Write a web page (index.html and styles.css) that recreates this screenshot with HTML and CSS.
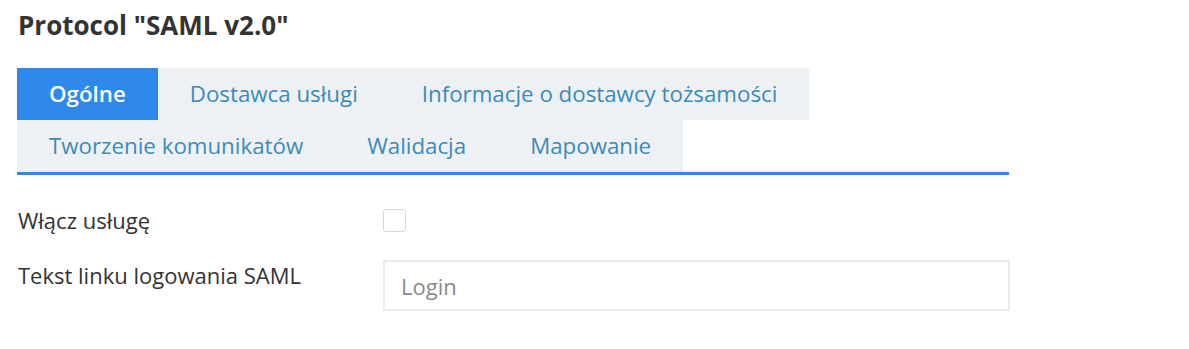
FILE: index.html
```html
<!DOCTYPE html>
<html>
<head>
    <title>Protocol SAML v2.0</title>
    <link rel="stylesheet" href="styles.css">
</head>
<body>
    <h1>Protocol "SAML v2.0"</h1>

    <!-- Tabs -->
    <div class="tabs">
        <a class="tab active">Ogólne</a>
        <a class="tab">Dostawca usługi</a>
        <a class="tab">Informacje o dostawcy tożsamości</a>
        <a class="tab">Tworzenie komunikatów</a>
        <a class="tab">Walidacja</a>
        <a class="tab">Mapowanie</a>
    </div>

    <!-- General settings -->
    <form class="settings">
        <div class="form-row">
            <label>Włącz usługę</label>
            <input type="checkbox" class="check">
        </div>
        <div class="form-row">
            <label>Tekst linku logowania SAML</label>
            <input type="text" class="text-input" placeholder="Login">
        </div>
    </form>
</body>
</html>
```

FILE: styles.css
```css
body {
    font-family: "Open Sans", Arial, sans-serif;
    margin: 0;
    padding: 0 17px;
    color: #333;
}
h1 {
    font-size: 26px;
    font-weight: bold;
    margin: 9px 1px 0;
    line-height: 32px;
}
.tabs {
    display: flex;
    flex-wrap: wrap;
    width: 992px;
    margin-top: 27px;
    border-bottom: 3px solid #2f89ea;
}
.tab {
    background-color: #eef1f4;
    color: #3b8bba;
    font-size: 22.3px;
    line-height: 52px;
    padding: 0 32px;
    cursor: pointer;
}
.tab.active {
    background-color: #2f89ea;
    color: white;
    font-weight: 600;
}
.settings {
    margin-top: 30px;
}
.form-row {
    display: flex;
    align-items: flex-start;
    margin-bottom: 25px;
}
.form-row label {
    width: 365px;
    font-size: 22px;
    line-height: 30px;
    padding-left: 1px;
}
.check {
    appearance: none;
    width: 23px;
    height: 23px;
    margin: 4px 0 0;
    border: 1px solid #d8d8d8;
    border-radius: 3px;
    background: white;
}
.text-input {
    width: 627px;
    height: 51px;
    box-sizing: border-box;
    border: 2px solid #ebebeb;
    padding: 0 16px;
    font-family: inherit;
    font-size: 22px;
    color: #333;
}
.text-input::placeholder {
    color: #8a8a8a;
}
```
